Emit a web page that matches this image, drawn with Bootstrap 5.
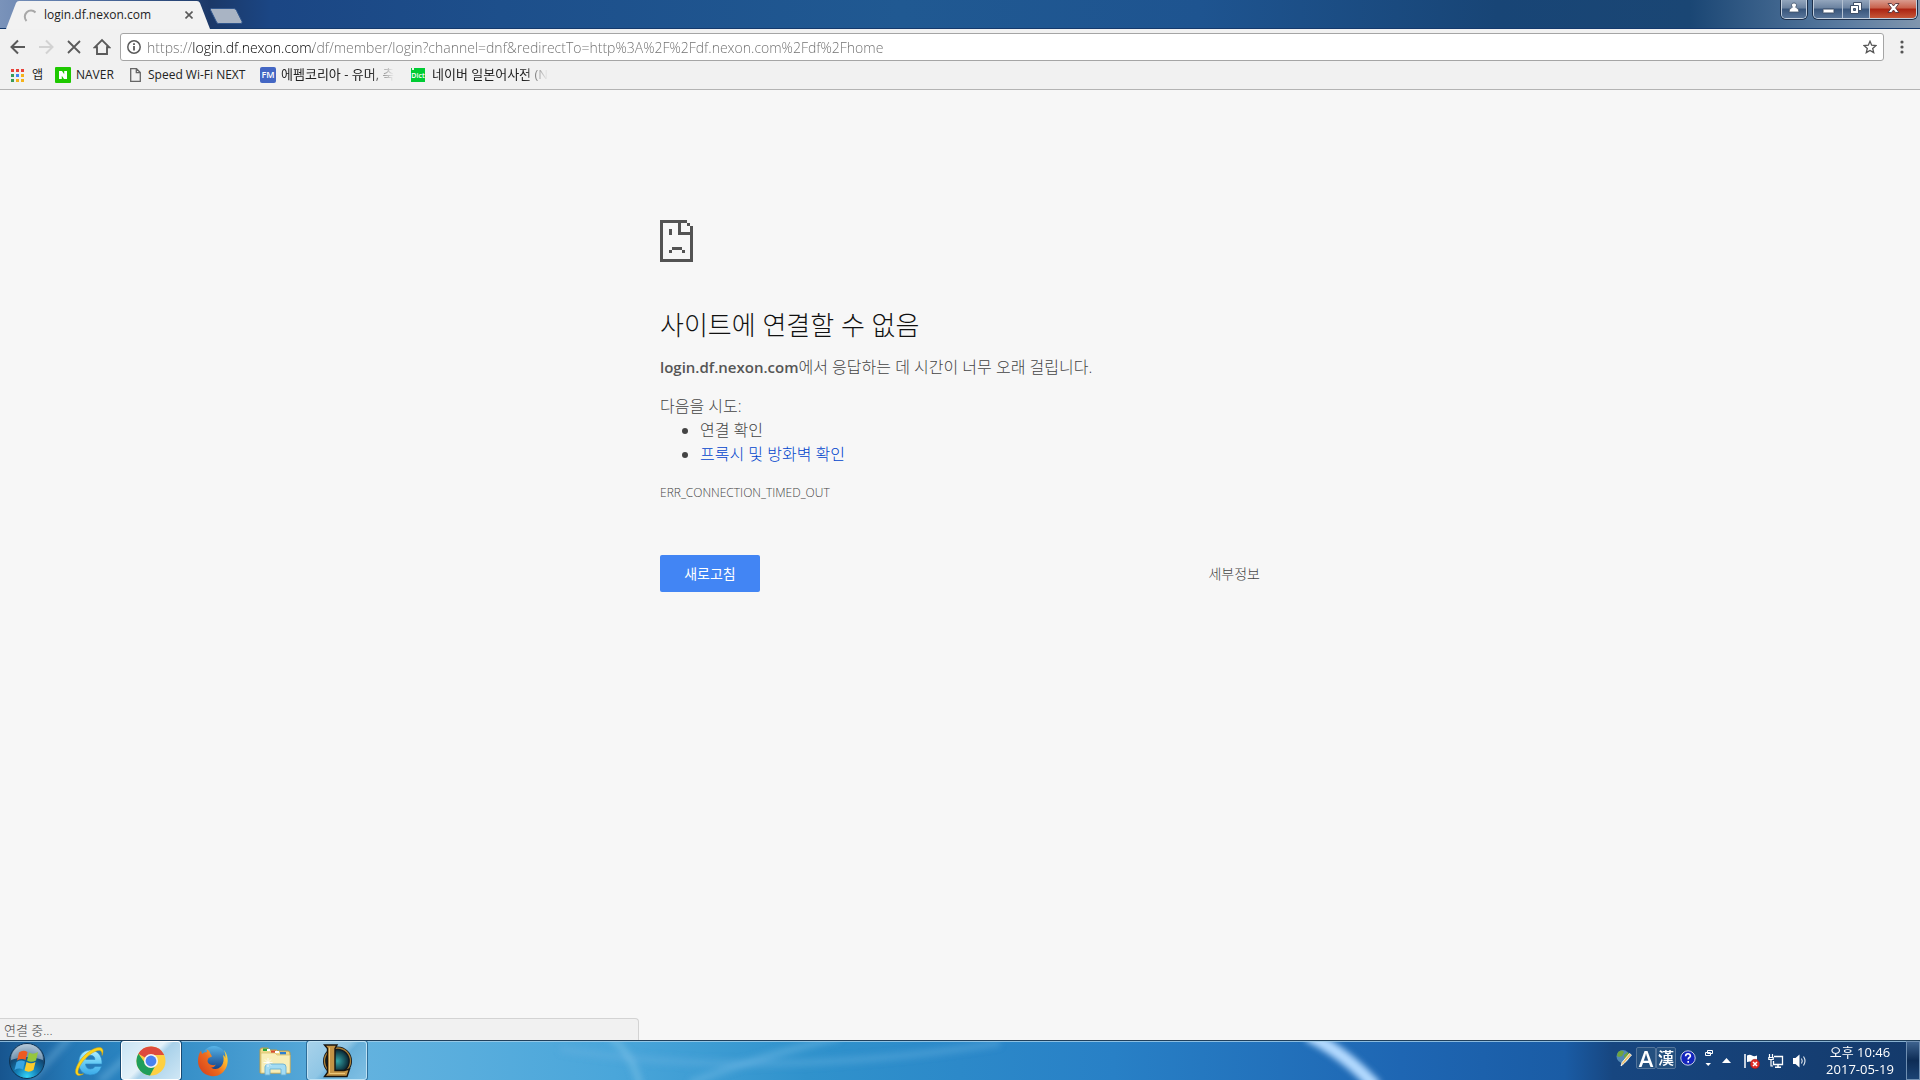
<!DOCTYPE html>
<html lang="ko">
<head>
<meta charset="utf-8">
<meta name="viewport" content="width=device-width, initial-scale=1">
<title>login.df.nexon.com</title>
<link href="https://cdn.jsdelivr.net/npm/bootstrap@5.3.0/dist/css/bootstrap.min.css" rel="stylesheet">
<style>
  body { font-family: "Open Sans", "Noto Sans CJK KR", sans-serif; background: #f7f7f7; font-size: 12px; color: #222; }
  button { border: 0; background: none; padding: 0; color: inherit; }
  svg { display: block; flex: none; }

  /* window frame */
  .titlebar { height: 29px; border-bottom: 1px solid #14396c; background: linear-gradient(90deg, #7a93ba 0, #5674a6 80px, #1b3868 210px, #1b4684 270px, #1d4f8b 500px, #205992 900px, #1e5490 1200px, #184576 78%, #1a4674 88%, #5a7ba0 96%, #8096ae 100%); }
  .tab-item { width: 206px; height: 29px; margin-left: 6px; margin-bottom: -1px; }
  .tab-item .tab-shape { inset: 0; }
  .tab-face { padding: 2px 19px 1px 17px; height: 29px; }
  .newtab { margin: 8px 0 0 -2px; height: 16px; }
  .winbtns { height: 19px; border: 1px solid #c3cfdd; border-top: 0; border-radius: 0 0 5px 5px; box-shadow: 0 0 0 1px #1c2f4a; overflow: hidden; }
  .winbtns button { height: 18px; display: flex; align-items: center; justify-content: center; padding-bottom: 2px; background: linear-gradient(#93a6bd 0, #6a819f 45%, #38557b 50%, #587599 100%); }
  .winbtns button + button { border-left: 1px solid #b3c1d2; }
  .winbtns .btn-x { background: linear-gradient(#d99b8e 0, #c8604a 45%, #ab2311 50%, #c65637 100%); }
  .win-main { margin: 0 3px 0 6px; }
  .w-user { width: 24px; } .w-min { width: 28px; } .w-max { width: 27px; } .w-close { width: 47px; }

  /* toolbar */
  .toolbar { background: #f1f1f1; border-bottom: 1px solid #b3b3b3; height: 61px; padding-top: 4px; }
  .omni { height: 28px; border: 1px solid #a5a5a5; border-radius: 3px; background: #fff; padding: 0 6px; gap: 6px; }
  .omni input { border: 0; outline: 0; padding: 0; font-size: 14px; font-weight: 300; height: 26px; color: transparent; -webkit-text-fill-color: transparent; background: linear-gradient(90deg, #6c6c6c 46px, #000 46px, #000 166px, #6c6c6c 166px); -webkit-background-clip: text; background-clip: text; }
  .nav-icons { gap: 10px; padding: 0 9px 0 9px; }
  .bookmarks { height: 28px; font-size: 12px; padding-left: 11px; }
  .bookmarks a { color: #222; text-decoration: none; display: flex; align-items: center; white-space: nowrap; overflow: hidden; }
  .bm-fade { font-size: 13px; -webkit-mask-image: linear-gradient(90deg, #000 calc(100% - 24px), transparent); mask-image: linear-gradient(90deg, #000 calc(100% - 24px), transparent); }
  .bm-apps { width: 44px; }
  .bm-naver { width: 75px; gap: 5px; }
  .bm-speed { width: 130px; gap: 7px; }
  .bm-fm { width: 136px; gap: 5px; margin-right: 15px; }
  .bm-dict { width: 137px; gap: 7px; }

  /* error page */
  .errbox { width: 600px; max-width: 100%; padding-top: 130px; color: #444; font-size: 16px; line-height: 24px; font-weight: 300; }
  .errbox h1 { font-size: 26px; line-height: 30px; font-weight: 300; color: #111; margin: 48px 0 15px; }
  .errbox strong { font-size: 15px; font-weight: 600; color: #555; }
  .errbox p { margin: 0 0 15px; }
  .errbox ul { margin: 0; padding-left: 40px; }
  .errbox ul a { color: #0044cc; text-decoration: none; }
  .errcode { font-size: 12px; margin-top: 15px; }
  .errbtns { margin-top: 50px; }
  .btn-reload { width: 100px; height: 37px; border-radius: 2px; background: #4285f4; color: #fff; font-size: 14px; line-height: 20px; font-weight: 400; }
  .btn-more { font-size: 14px; font-weight: 300; }
  .statusbub { left: 0; bottom: 0; width: 33.3%; height: 22px; line-height: 22px; padding-left: 4px; font-size: 13px; font-weight: 300; background: #f1f1f1; border: 1px solid #d3d3d3; border-left: 0; border-bottom: 0; border-top-right-radius: 4px; color: #444; }

  /* taskbar */
  .taskbar { height: 40px; border-top: 1px solid #20405c; background: #1c5b9f; overflow: hidden; }
  .taskbar .wall { inset: 0; width: 100%; height: 100%; }
  .slot { width: 60px; height: 39px; display: flex; align-items: center; justify-content: center; }
  .slot-start { width: 54px; margin-right: 5px; }
  .slot-on { background: linear-gradient(135deg, #c9e4f4 0, #e3f1f9 45%, #a9d1ea 55%, #cfe7f5 100%); border: 1px solid #fff; border-radius: 3px; box-shadow: 0 0 0 1px #174a73; }
  .slot-run { background: linear-gradient(135deg, #a8d2ea 0, #8fc6e5 45%, #68b0da 55%, #80c0e4 100%); border: 1px solid #bfe2f4; border-radius: 3px; box-shadow: 0 0 0 1px #2d6d99; }
  .pins { gap: 2px; }
  .tray { color: #fff; }
  .tray-ime { padding-bottom: 6px; }
  .ime-key { width: 20px; height: 22px; border: 1px solid #54759b; border-radius: 2px; background: #24507f; font-size: 16px; line-height: 20px; font-weight: 500; text-align: center; color: #fff; }
  .ime-a { font-size: 22px; font-weight: 600; }
  .tray-icons { gap: 8px; margin: 0 6px 0 13px; }
  .clock { width: 92px; font-size: 13px; line-height: 17px; text-align: center; }
  .showdesk { width: 14px; height: 39px; border: 1px solid #6f8fb2; background: linear-gradient(#3d628e, #0d2c55 50%, #1b4374); }
</style>
<script src="https://cdn.jsdelivr.net/npm/bootstrap@5.3.0/dist/js/bootstrap.bundle.min.js"></script>
</head>
<body class="d-flex flex-column min-vh-100">

<header>
  <div class="titlebar d-flex align-items-start">
    <div class="tab-item position-relative">
      <svg class="tab-shape position-absolute" width="206" height="29" viewBox="0 0 206 29"><path d="M0 29L10 3Q11 1 13 1H191Q193 1 194 3L204 29Z" fill="#f2f2f2"/></svg>
      <div class="tab-face position-relative d-flex align-items-center">
        <svg width="13" height="13" viewBox="0 0 13 13" class="me-2"><path d="M3.500 12A5.800 5.800 0 1 1 12.500 3.500" fill="none" stroke="#a8a8a8" stroke-width="2"/></svg>
        <span class="flex-grow-1 text-nowrap">login.df.nexon.com</span>
        <button type="button" aria-label="탭 닫기"><svg width="8" height="8" viewBox="0 0 8 8"><path d="M.5.5l7 7M7.500.5l-7 7" stroke="#5a5a5a" stroke-width="1.600"/></svg></button>
      </div>
    </div>
    <button type="button" class="newtab" aria-label="새 탭"><svg width="33" height="16" viewBox="0 0 33 16"><path d="M1.500.5H24Q25.500.5 26.500 2.500L32 13.500Q32.500 15.500 31 15.500H8.500Q7 15.500 6.500 14L.5 2Q0 .5 1.500.5Z" fill="#a9b4c4" stroke="#31568c"/></svg></button>
    <div class="winbtns d-flex ms-auto"><button type="button" class="w-user" aria-label="사용자"><svg width="12" height="12" viewBox="0 0 12 12"><path d="M6 1a2.300 2.300 0 0 1 1.500 4.200Q11 6 11 10H1Q1 6 4.500 5.200A2.300 2.300 0 0 1 6 1Z" fill="#fff" stroke="#3f5068" stroke-width=".8"/></svg></button></div>
    <div class="winbtns win-main d-flex">
      <button type="button" class="w-min" aria-label="최소화"><svg width="13" height="14" viewBox="0 0 13 14"><rect x="1" y="8" width="11" height="4" rx=".5" fill="#fff" stroke="#3f5068"/></svg></button>
      <button type="button" class="w-max" aria-label="이전 크기로"><svg width="14" height="14" viewBox="0 0 14 14"><g fill="#fff" stroke="#3f5068"><path d="M4.500 1.500h8v8h-8z"/><path d="M1.500 4.500h8v8h-8z"/><path d="M4.500 7.500h2v2h-2z" fill="#5b7596"/></g></svg></button>
      <button type="button" class="w-close btn-x" aria-label="닫기"><svg width="13" height="12" viewBox="0 0 13 12"><path d="M1 1.500h3.500l2 2.500 2-2.500H12L8.600 6 12 10.500H8.500l-2-2.500-2 2.500H1L4.400 6Z" fill="#fff" stroke="#54323a" stroke-width=".9"/></svg></button>
    </div>
  </div>

  <div class="toolbar">
    <div class="d-flex align-items-center">
      <div class="nav-icons d-flex align-items-center">
        <button type="button" aria-label="뒤로"><svg width="18" height="18" viewBox="0 0 18 18"><path d="M16 9H3M9 2.500L2.500 9 9 15.500" fill="none" stroke="#5a5a5a" stroke-width="2"/></svg></button>
        <button type="button" aria-label="앞으로" disabled><svg width="18" height="18" viewBox="0 0 18 18"><path d="M2 9h13M9 2.500L15.500 9 9 15.500" fill="none" stroke="#d2d2d2" stroke-width="2"/></svg></button>
        <button type="button" aria-label="중지"><svg width="18" height="18" viewBox="0 0 18 18"><path d="M3 3l12 12M15 3L3 15" stroke="#5a5a5a" stroke-width="1.800"/></svg></button>
        <button type="button" aria-label="홈"><svg width="18" height="18" viewBox="0 0 18 18"><path d="M1.700 9.300L9 2l7.300 7.300H14V16H4V9.300Z" fill="none" stroke="#5a5a5a" stroke-width="1.900"/></svg></button>
      </div>
      <div class="omni d-flex align-items-center flex-grow-1">
        <svg width="14" height="14" viewBox="0 0 14 14" class="flex-shrink-0"><circle cx="7" cy="7" r="6.200" fill="none" stroke="#5a5a5a" stroke-width="1.500"/><path d="M7 6v4.500M7 3.300v1.700" stroke="#5a5a5a" stroke-width="1.800"/></svg>
        <input type="text" class="flex-grow-1" aria-label="주소창" spellcheck="false" value="https://login.df.nexon.com/df/member/login?channel=dnf&amp;redirectTo=http%3A%2F%2Fdf.nexon.com%2Fdf%2Fhome">
        <button type="button" aria-label="북마크에 추가"><svg width="14" height="14" viewBox="0 0 14 14"><path d="M7 1.300l1.700 3.900 4.200.4-3.200 2.800 1 4.200L7 10.400l-3.700 2.200 1-4.200L1.100 5.600l4.200-.4Z" fill="none" stroke="#555" stroke-width="1.300"/></svg></button>
      </div>
      <button type="button" class="px-3" aria-label="메뉴"><svg width="4" height="14" viewBox="0 0 4 14"><g fill="#555"><circle cx="2" cy="2" r="1.600"/><circle cx="2" cy="7" r="1.600"/><circle cx="2" cy="12" r="1.600"/></g></svg></button>
    </div>
    <nav class="bookmarks d-flex align-items-center" aria-label="북마크">
      <a href="#" class="bm-apps"><svg width="13" height="13" viewBox="0 0 13 13" class="me-2"><path d="M0 0h3v3H0zM5 0h3v3H5zM10 0h3v3h-3z" fill="#e9423a"/><path d="M0 5h3v3H0z" fill="#3a9b58"/><path d="M5 5h3v3H5z" fill="#4285f4"/><path d="M10 5h3v3h-3zM10 10h3v3h-3z" fill="#f5b219"/><path d="M0 10h3v3H0z" fill="#3a9b58"/><path d="M5 10h3v3H5z" fill="#f5b219"/></svg>앱</a>
      <a href="#" class="bm-naver"><svg width="16" height="16" viewBox="0 0 16 16"><rect width="16" height="16" rx="1" fill="#1ec800"/><path d="M4 4h3l2.200 3.300V4H12v8H9L6.800 8.700V12H4Z" fill="#fff"/></svg>NAVER</a>
      <a href="#" class="bm-speed"><svg width="11" height="14" viewBox="0 0 11 14"><path d="M.7.7H6.500L10.300 4.500V13.300H.7ZM6.300.7V4.700H10.300" fill="none" stroke="#666" stroke-width="1.300"/></svg>Speed Wi-Fi NEXT</a>
      <a href="#" class="bm-fm"><svg width="16" height="16" viewBox="0 0 16 16"><rect width="16" height="16" rx="2" fill="#4467c4"/><text x="8" y="11" text-anchor="middle" font-size="9" font-weight="600" font-family="Open Sans" fill="#fff">FM</text></svg><span class="bm-fade">에펨코리아 - 유머, 축</span></a>
      <a href="#" class="bm-dict"><svg width="14" height="14" viewBox="0 0 14 14"><path d="M0 0h1v2h2V0h11v14H0z" fill="#0c3"/><text x="7" y="10" text-anchor="middle" font-size="7" font-weight="600" font-family="Open Sans" fill="#fff">Dict</text></svg><span class="bm-fade">네이버 일본어사전 (N</span></a>
    </nav>
  </div>
</header>

<main class="flex-grow-1 position-relative">
  <div class="errbox mx-auto">
    <svg width="33" height="42" viewBox="0 0 33 42" shape-rendering="crispEdges" fill="#535353"><path d="M0 0H27V3H3V39H30V15H18V3H21V12H30V6H33V42H0ZM27 3h3v3h-3zM9 9h3v6H9zM12 27h10v3H12zM9 30h3v3H9zM22 30h3v3h-3z"/></svg>
    <h1>사이트에 연결할 수 없음</h1>
    <p><strong>login.df.nexon.com</strong>에서 응답하는 데 시간이 너무 오래 걸립니다.</p>
    <div>다음을 시도:</div>
    <ul>
      <li>연결 확인</li>
      <li><a href="#">프록시 및 방화벽 확인</a></li>
    </ul>
    <div class="errcode">ERR_CONNECTION_TIMED_OUT</div>
    <div class="errbtns d-flex justify-content-between align-items-center">
      <button type="button" class="btn-reload">새로고침</button>
      <button type="button" class="btn-more">세부정보</button>
    </div>
  </div>
  <div class="statusbub position-absolute">연결 중...</div>
</main>

<footer class="taskbar position-relative">
  <svg class="wall position-absolute" viewBox="0 0 1920 39" preserveAspectRatio="none" aria-hidden="true">
    <defs>
      <linearGradient id="sky"><stop offset="0" stop-color="#17558f"/><stop offset=".035" stop-color="#2577b4"/><stop offset=".07" stop-color="#2b86c2"/><stop offset=".19" stop-color="#62b2df"/><stop offset=".32" stop-color="#4aa6da"/><stop offset=".42" stop-color="#3092cc"/><stop offset=".58" stop-color="#2880c6"/><stop offset=".73" stop-color="#1e66b3"/><stop offset=".815" stop-color="#1a5ca5"/><stop offset=".84" stop-color="#174680"/><stop offset="1" stop-color="#143a6b"/></linearGradient>
      <filter id="soft" x="-20%" y="-20%" width="140%" height="140%"><feGaussianBlur stdDeviation="3"/></filter>
    </defs>
    <rect width="1920" height="39" fill="url(#sky)"/>
    <g filter="url(#soft)" fill="none">
      <path d="M30 40L70-4M100 40L150-4" stroke="#8cc6ea" stroke-width="7" opacity=".35"/>
      <path d="M560 8Q760 40 1000 2" stroke="#67b1e2" stroke-width="7" opacity=".4"/>
      <path d="M690 42Q750 18 840-4" stroke="#7bbfe8" stroke-width="7" opacity=".4"/>
      <path d="M610-4Q632 12 640 44" stroke="#8ccbea" stroke-width="7" opacity=".4"/>
      <path d="M1308-6Q1345 12 1376 46" stroke="#b4daff" stroke-width="13"/>
    </g>
    <rect width="1920" height="1" fill="#a5cfea" opacity=".8"/>
  </svg>
  <div class="position-relative d-flex align-items-center">
    <button type="button" class="slot slot-start" aria-label="시작"><svg width="38" height="38" viewBox="0 0 38 38"><defs><radialGradient id="orb" cx=".5" cy=".95" r=".9"><stop offset="0" stop-color="#35d5f7"/><stop offset=".35" stop-color="#1480b8"/><stop offset=".7" stop-color="#124671"/><stop offset="1" stop-color="#8ba6bc"/></radialGradient></defs><circle cx="19" cy="19" r="17.500" fill="url(#orb)" stroke="#0e3354"/><path d="M3 18A16 16 0 0 1 35 18Q19 12 3 18Z" fill="#d4e2ee" opacity=".5"/><path d="M11 10.500Q15 7.500 19.500 10L17.500 18Q14 16 9 18.500Z" fill="#ee5a21"/><path d="M21 10.500Q25 13 30 10L28 18.500Q23 21 19 18.500Z" fill="#96c63c"/><path d="M8.500 20Q13 17.500 17 19.500L15 27.500Q11 25.500 6.500 28Z" fill="#3aa5e2"/><path d="M18.500 20Q23 22.500 27.500 20L25.500 28Q21 31 16.500 28.500Z" fill="#fccb2b"/></svg></button>
    <div class="pins d-flex">
      <button type="button" class="slot" aria-label="Internet Explorer"><svg width="32" height="32" viewBox="0 0 32 32"><defs><linearGradient id="ieb" x2="0" y2="1"><stop stop-color="#b9f1ff"/><stop offset=".5" stop-color="#69cdf5"/><stop offset="1" stop-color="#3aa9e8"/></linearGradient></defs><path d="M17 5C24 5 29.500 10.500 29 19H12.500Q13 24 17.500 24 20.500 24 22 21.500H28.500Q26 30 17 30 6 29 5.500 18 6 6 17 5ZM12.700 14.500H22Q21.500 10.300 17.300 10.300 13.500 10.500 12.700 14.500Z" fill="url(#ieb)" stroke="#2b8ac6" stroke-width=".6"/><path d="M10.500 28.800C6.500 31.500 2.800 31 2.500 27 2.300 21 9 11 17 6 22 2.500 27.500 1.500 29.500 4 30.500 5.500 30 8 29 10.500 29.500 5 26.500 4.500 22 6.500 14 10 6 20 5 26 4.500 29 7 29.800 10.500 28.800Z" fill="#fcd51c" stroke="#d19c0c" stroke-width=".5"/></svg></button>
      <button type="button" class="slot slot-on" aria-label="Chrome"><svg width="30" height="30" viewBox="0 0 30 30"><circle cx="15" cy="15" r="14.500" fill="#fdd042"/><path d="M15 15L2.400 7.700A14.500 14.500 0 0 1 28.200 9H15Z" fill="#de4b3d"/><path d="M2.400 7.700A14.500 14.500 0 0 0 14 29.500L20.200 18 15 15 9.800 18Z" fill="#1e9e5a"/><circle cx="15" cy="15" r="7" fill="#f4f4f4"/><circle cx="15" cy="15" r="5.400" fill="#4a82ef"/></svg></button>
      <button type="button" class="slot" aria-label="Firefox"><svg width="32" height="32" viewBox="0 0 32 32"><defs><linearGradient id="fxg" x1="1" y1="0" x2="0" y2=".7"><stop offset="0" stop-color="#ffe64a"/><stop offset=".3" stop-color="#fbb02a"/><stop offset=".6" stop-color="#ee6a1e"/><stop offset="1" stop-color="#d9461c"/></linearGradient><linearGradient id="fxb" x2="0" y2="1"><stop stop-color="#57b4e8"/><stop offset="1" stop-color="#123f86"/></linearGradient></defs><circle cx="17" cy="13" r="12" fill="url(#fxb)"/><path d="M27 5C31 10 32 17 29 23 26 29 20 32 14 31 6 30 1 23 1 16 1 12 2 8 4 5.500L5 9Q7 7 10 7L9.500 4.500Q12.500 5 13 8L15 11.500 11.500 13Q9 17 13 19.500 17 21 19 19.500 17 23 14 22.500 19 26 24 21.500 28 17 26 10Q28 11 28.300 13 29 9 27 5Z" fill="url(#fxg)"/></svg></button>
      <button type="button" class="slot" aria-label="탐색기"><svg width="34" height="32" viewBox="0 0 34 32"><path d="M2 5Q2 3 4 3H10L11 5H19L20 6H30Q32 6 32 8V28H2Z" fill="#efd98a" stroke="#b99b4a"/><path d="M5 3.500H10V6H5Z" fill="#28a43c"/><path d="M13 5.500h5V8h-5z" fill="#d84a2f"/><path d="M22 7h6v2.500h-6z" fill="#2d7fd0"/><path d="M9 4h3v2H9zM17 6h4v2h-4z" fill="#fff"/><path d="M3 8H17L19 10H32V28H3Z" fill="#f8eeb8" stroke="#d9c274" stroke-width=".8"/><path d="M7 30V22Q7 19 10 19H25Q28 19 28 22V30H23V24H12V30Z" fill="#a4dcf3" stroke="#69afd3" stroke-width=".9"/><path d="M10 13v9M5.500 17.500h9M7 14.500l6 6M13 14.500l-6 6" stroke="#fff" stroke-width=".8"/></svg></button>
      <button type="button" class="slot slot-run" aria-label="League of Legends"><svg width="32" height="34" viewBox="0 0 32 34"><defs><radialGradient id="lolg"><stop offset="0" stop-color="#35a5a8"/><stop offset="1" stop-color="#0a2b38"/></radialGradient></defs><circle cx="16.500" cy="17" r="14.500" fill="#11191e"/><circle cx="16.500" cy="17" r="13" fill="none" stroke="#a87c34" stroke-width="1.300"/><circle cx="16.500" cy="17" r="11" fill="url(#lolg)"/><path d="M3.500 1H16L14 4.500V26.500H23L28.500 25 26 32.500H3.500L6.500 28.500V4.500Z" fill="#c49446" stroke="#19150f" stroke-width="1.400"/><path d="M8.500 3.500V29.500H24" fill="none" stroke="#ecc87a"/></svg></button>
    </div>

    <div class="tray d-flex align-items-center ms-auto">
      <div class="tray-ime d-flex align-items-center">
        <svg width="16" height="18" viewBox="0 0 16 18" class="me-1"><circle cx="7" cy="7.500" r="6.500" fill="#5288b6"/><path d="M2 3Q6 0 8 3L6 7 3 8 1 7ZM8 6L12 3Q14 6 13 9L9 11Z" fill="#70a43d"/><path d="M15.500 6L8 14.500 5 17 6 13.500 13.500 4.500Z" fill="#f0c068" stroke="#fff" stroke-width=".8"/></svg>
        <button type="button" class="ime-key ime-a">A</button>
        <button type="button" class="ime-key me-1">漢</button>
        <svg width="16" height="16" viewBox="0 0 16 16"><circle cx="8" cy="8" r="7.200" fill="#1425bd" stroke="#c5cce2"/><path d="M5.600 6.200Q5.700 3.700 8 3.700T10.400 6Q10.400 7 9 7.800 8.200 8.300 8.200 9.600M8.200 11v1.700" fill="none" stroke="#fff" stroke-width="1.600"/></svg>
        <svg width="10" height="18" viewBox="0 0 10 18" class="ms-2"><path d="M3.500 1.500H8.500V4.500H3.500ZM1.500 3.500H6.500V6.500H1.500Z" fill="#174680" stroke="#fff"/><path d="M1.500 14H7L4.200 17Z" fill="#fff"/></svg>
      </div>
      <button type="button" class="ms-2" aria-label="숨겨진 아이콘"><svg width="9" height="5" viewBox="0 0 9 5"><path d="M0 5L4.500 0 9 5Z" fill="#fff"/></svg></button>
      <div class="tray-icons d-flex">
        <svg width="16" height="16" viewBox="0 0 16 16"><path d="M1 1v14" stroke="#fff" stroke-width="1.500"/><path d="M3 2.500Q6 1 8 2.500T13 2.500V9Q10 10 8 9T3 9Z" fill="#fff"/><circle cx="11" cy="11" r="4.700" fill="#dc2b25" stroke="#8c1614" stroke-width=".5"/><path d="M9 9l4 4M13 9l-4 4" stroke="#fff" stroke-width="1.500"/></svg>
        <svg width="16" height="16" viewBox="0 0 16 16"><path d="M6 3.500H14.500V11.500H5.500V8" fill="#1b4375" stroke="#fff" stroke-width="1.300"/><path d="M7 14.300H13M10 11.500V14" stroke="#fff" stroke-width="1.500"/><path d="M1.500 1V4M4.500 1V4M.8 4.500H5.200V6.500H.8ZM3 6.500V13H5" fill="none" stroke="#fff" stroke-width="1.200"/></svg>
        <svg width="16" height="16" viewBox="0 0 16 16"><path d="M1 5H3.500L7.500 1.500V14.500L3.500 11H1Z" fill="#fff"/><path d="M9.500 5.500Q11 8 9.500 10.500M11.500 3.500Q14.500 8 11.500 12.500" fill="none" stroke="#e8eef5" stroke-width="1.100"/></svg>
      </div>
      <div class="clock">오후 10:46<br>2017-05-19</div>
      <button type="button" class="showdesk" aria-label="바탕 화면 보기"></button>
    </div>
  </div>
</footer>
</body>
</html>
